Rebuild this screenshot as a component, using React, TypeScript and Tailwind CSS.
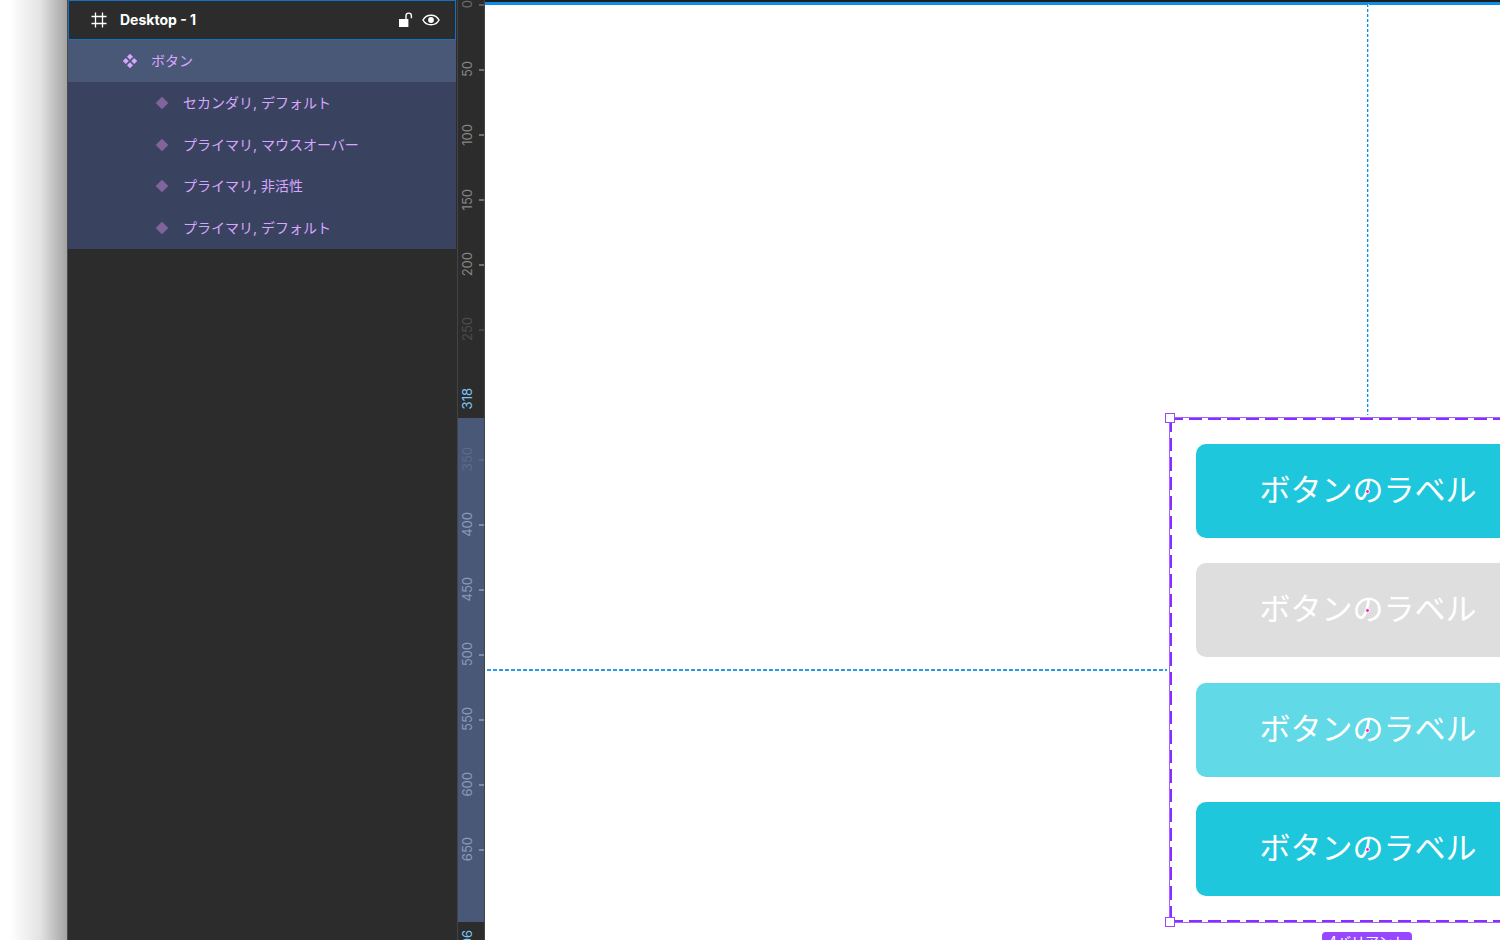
import React from 'react';
import clsx from 'clsx';

const layers = [
    'セカンダリ, デフォルト',
    'プライマリ, マウスオーバー',
    'プライマリ, 非活性',
    'プライマリ, デフォルト',
];

const variants = [
    { id: 'secondary', color: 'bg-[#1fc7dd]' },
    { id: 'disabled', color: 'bg-[#dedede]' },
    { id: 'hover', color: 'bg-[#61d9e7]' },
    { id: 'default', color: 'bg-[#1fc7dd]' },
];

// Marks next to the ends of the selection are faded or left out
const ticks = [
    { value: 0, style: 'text-[#6a6a6a]' },
    { value: 50, style: 'text-[#858585]' },
    { value: 100, style: 'text-[#858585]' },
    { value: 150, style: 'text-[#858585]' },
    { value: 200, style: 'text-[#858585]' },
    { value: 250, style: 'text-[#4c4c4c]' },
    { value: 300, style: 'invisible' },
    { value: 350, style: 'text-[#5c6a8c]' },
    { value: 400, style: 'text-[#8c9ab8]' },
    { value: 450, style: 'text-[#8c9ab8]' },
    { value: 500, style: 'text-[#8c9ab8]' },
    { value: 550, style: 'text-[#8c9ab8]' },
    { value: 600, style: 'text-[#8c9ab8]' },
    { value: 650, style: 'text-[#8c9ab8]' },
];

const FrameIcon: React.FC = () => (
    <svg className="h-4 w-4 shrink-0" viewBox="0 0 16 16" fill="none" stroke="#fff" strokeWidth="1.3">
        <path d="M4.500 .5v15M11.500 .5v15M.5 4.500h15M.5 11.500h15" />
    </svg>
);

const ComponentIcon: React.FC = () => (
    <svg className="h-4 w-4 shrink-0" viewBox="0 0 16 16" fill="#d9a6ff">
        <path d="M8 .8l3 3-3 3-3-3zM8 9.200l3 3-3 3-3-3zM3.800 5l3 3-3 3-3-3zM12.200 5l3 3-3 3-3-3z" />
    </svg>
);

const VariantIcon: React.FC = () => (
    <svg className="h-4 w-4 shrink-0" viewBox="0 0 16 16" fill="#80649b">
        <path d="M8 1.7l6.3 6.3L8 14.3 1.7 8z" />
    </svg>
);

const UnlockIcon: React.FC = () => (
    <svg className="h-4 w-4" viewBox="0 0 16 16" fill="none">
        <path d="M2 7h9.4v8H2z" fill="#fff" />
        <path d="M9 7V3.800a2.700 2.700 0 0 1 5.400 0v2.400" stroke="#fff" strokeWidth="1.4" />
    </svg>
);

const EyeIcon: React.FC = () => (
    <svg className="h-4 w-5" viewBox="0 0 20 16" fill="none">
        <path d="M2 8c1.7-3.200 4.600-4.800 8-4.800s6.300 1.600 8 4.800c-1.700 3.200-4.600 4.800-8 4.800S3.700 11.200 2 8z" stroke="#fff" strokeWidth="1.5" />
        <circle cx="10" cy="8" r="2.900" fill="#fff" />
    </svg>
);

const LayersPanel: React.FC = () => (
    <aside className="w-[390px] shrink-0 border-l border-[#4a4a4a] bg-[#2c2c2c] pr-px text-sm">
        <div className="flex h-10 items-center border border-[#1471c4] pr-3.5 pl-[22px]">
            <FrameIcon />
            <h2 className="ml-[13px] flex-1 font-bold text-white">Desktop - 1</h2>
            <button aria-label="ロック" className="mr-2">
                <UnlockIcon />
            </button>
            <button aria-label="表示">
                <EyeIcon />
            </button>
        </div>
        <div className="flex h-[42px] items-center gap-[13px] bg-[#4a5877] pl-[54px] text-[#d9a6ff]">
            <ComponentIcon />
            <span>ボタン</span>
        </div>
        <ul className="grid h-[167px] grid-rows-4 bg-[#394360] text-[#d9a6ff]">
            {layers.map((name) => (
                <li key={name} className="flex items-center gap-[13px] pl-[86px]">
                    <VariantIcon />
                    <span>{name}</span>
                </li>
            ))}
        </ul>
    </aside>
);

const Ruler: React.FC = () => (
    <div className="relative w-7 shrink-0 overflow-hidden border-x border-[#444] bg-[#2c2c2c] text-[13px] leading-4">
        {/* Selected range */}
        <div className="absolute inset-x-0 top-[418px] h-[504px] bg-[#4a5877]" />
        <span className="absolute top-[388px] left-px rotate-180 text-[#7cc4f8] [writing-mode:vertical-rl]">318</span>
        <span className="absolute top-[930px] left-px rotate-180 text-[#7cc4f8] [writing-mode:vertical-rl]">706</span>
        <ol className="relative -mt-7">
            {ticks.map((tick) => (
                <li key={tick.value} className={clsx('flex h-[65px] items-center justify-between pl-px', tick.style)}>
                    <span className="rotate-180 [writing-mode:vertical-rl]">{tick.value}</span>
                    <span className="h-0.5 w-[5px] bg-current opacity-80" />
                </li>
            ))}
        </ol>
    </div>
);

const Canvas: React.FC = () => (
    <main className="relative min-w-0 flex-1 overflow-hidden border-t-2 border-[#1e1e1e] bg-white">
        <div className="h-[3px] bg-[#0d8ee9]" />

        {/* Guides from the frame edges to the selection */}
        <svg className="absolute top-0.5 left-[882px] h-[411px] w-0.5">
            <line x1="0.5" y1="0" x2="0.5" y2="411" stroke="#0d8ee9" strokeDasharray="3 2" />
            <line x1="1.5" y1="0" x2="1.5" y2="411" stroke="#b4dcfa" strokeDasharray="3 2" />
        </svg>
        <svg className="absolute top-[667px] left-0.5 h-0.5 w-[680px]" stroke="#2a9bec" strokeWidth="2">
            <line x1="0" y1="1" x2="680" y2="1" strokeDasharray="4 2" />
        </svg>

        {/* Component set */}
        <section className="absolute top-[415px] left-[684px] h-[506px] w-[398px] border border-[#a366ff] p-[26px]">
            <svg className="absolute inset-0 h-full w-full" fill="none" stroke="#8a2eff" strokeWidth="2">
                <line x1="0" y1="1" x2="396" y2="1" strokeDasharray="13 6" />
                <line x1="0" y1="503" x2="396" y2="503" strokeDasharray="13 6" />
                <line x1="1" y1="0" x2="1" y2="504" strokeDasharray="14 6 13 6" />
            </svg>
            <span className="absolute -top-[5px] -left-[5px] h-2.5 w-2.5 border border-[#9747ff] bg-white" />
            <span className="absolute -bottom-[5px] -left-[5px] h-2.5 w-2.5 border border-[#9747ff] bg-white" />
            <div className="flex h-full flex-col justify-between">
                {variants.map((variant) => (
                    <button
                        key={variant.id}
                        className={clsx('relative h-[94px] rounded-[10px] pb-0.5 text-[31px] leading-10 text-white', variant.color)}
                    >
                        ボタンのラベル
                        <span className="absolute top-[45px] left-[169px] h-[5px] w-[5px] rounded-full border border-white bg-[#ff2bb8]" />
                    </button>
                ))}
            </div>
            <span className="absolute top-[514px] left-[152px] rounded-sm bg-[#9747ff] px-1.5 py-0.5 text-[14px] leading-4 whitespace-nowrap text-white">
                4バリアント
            </span>
        </section>
    </main>
);

const App: React.FC = () => {
    return (
        <div className="flex h-screen overflow-hidden bg-white font-['Inter','Noto_Sans_CJK_JP',sans-serif]">
            {/* Window shadow */}
            <div className="w-[67px] shrink-0 bg-linear-to-r from-white from-15% via-[#e3e3e3] via-60% to-[#a3a3a3]" />
            <LayersPanel />
            <Ruler />
            <Canvas />
        </div>
    );
};

export default App;
